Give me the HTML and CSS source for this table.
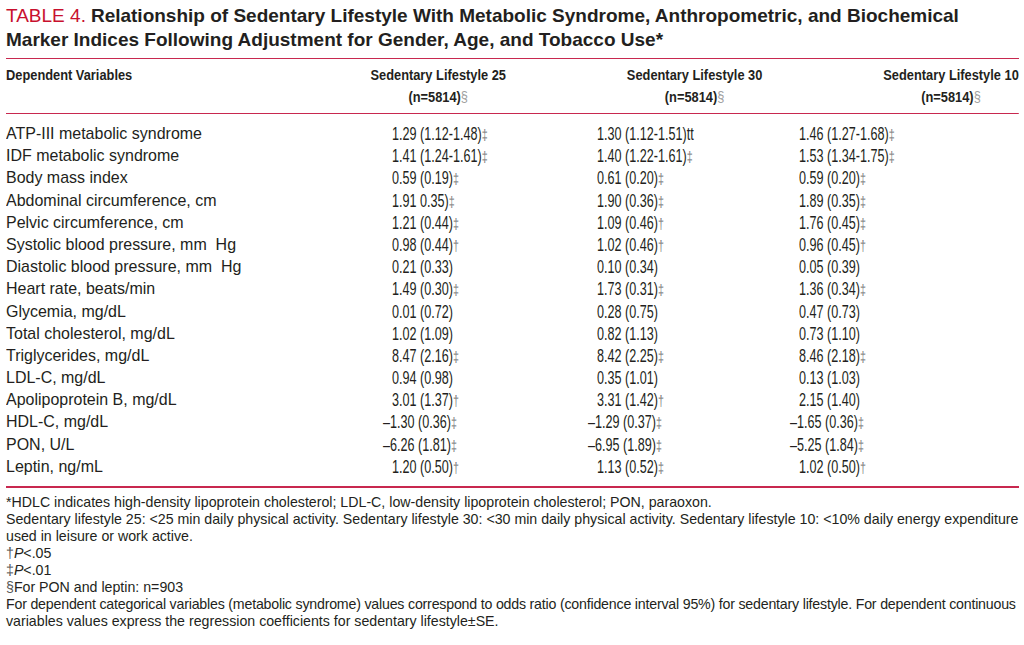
FILE: index.html
```html
<!DOCTYPE html>
<html lang="en">
<head>
<meta charset="utf-8">
<title>Table 4</title>
<link rel="stylesheet" href="styles.css">
</head>
<body>
<div class="page">
  <h1 class="title"><span class="line"><span class="tag">TABLE 4.</span>Relationship of Sedentary Lifestyle With Metabolic Syndrome, Anthropometric, and Biochemical</span><span class="line">Marker Indices Following Adjustment for Gender, Age, and Tobacco Use*</span></h1>
  <div class="table">
    <div class="thead">
      <div class="th-label">Dependent Variables</div>
      <div class="th">Sedentary Lifestyle 25<br>(n=5814)<span class="mk">§</span></div>
      <div class="th">Sedentary Lifestyle 30<br>(n=5814)<span class="mk">§</span></div>
      <div class="th">Sedentary Lifestyle 10<br>(n=5814)<span class="mk">§</span></div>
    </div>
    <div class="tbody">
      <div class="row"><span class="name">ATP-III metabolic syndrome</span><span class="val">1.29 (1.12-1.48)<span class="mk">‡</span></span><span class="val">1.30 (1.12-1.51)tt</span><span class="val">1.46 (1.27-1.68)<span class="mk">‡</span></span></div>
      <div class="row"><span class="name">IDF metabolic syndrome</span><span class="val">1.41 (1.24-1.61)<span class="mk">‡</span></span><span class="val">1.40 (1.22-1.61)<span class="mk">‡</span></span><span class="val">1.53 (1.34-1.75)<span class="mk">‡</span></span></div>
      <div class="row"><span class="name">Body mass index</span><span class="val">0.59 (0.19)<span class="mk">‡</span></span><span class="val">0.61 (0.20)<span class="mk">‡</span></span><span class="val">0.59 (0.20)<span class="mk">‡</span></span></div>
      <div class="row"><span class="name">Abdominal circumference, cm</span><span class="val">1.91 0.35)<span class="mk">‡</span></span><span class="val">1.90 (0.36)<span class="mk">‡</span></span><span class="val">1.89 (0.35)<span class="mk">‡</span></span></div>
      <div class="row"><span class="name">Pelvic circumference, cm</span><span class="val">1.21 (0.44)<span class="mk">‡</span></span><span class="val">1.09 (0.46)<span class="mk">†</span></span><span class="val">1.76 (0.45)<span class="mk">‡</span></span></div>
      <div class="row"><span class="name">Systolic blood pressure, mm&nbsp;&nbsp;Hg</span><span class="val">0.98 (0.44)<span class="mk">†</span></span><span class="val">1.02 (0.46)<span class="mk">†</span></span><span class="val">0.96 (0.45)<span class="mk">†</span></span></div>
      <div class="row"><span class="name">Diastolic blood pressure, mm&nbsp;&nbsp;Hg</span><span class="val">0.21 (0.33)</span><span class="val">0.10 (0.34)</span><span class="val">0.05 (0.39)</span></div>
      <div class="row"><span class="name">Heart rate, beats/min</span><span class="val">1.49 (0.30)<span class="mk">‡</span></span><span class="val">1.73 (0.31)<span class="mk">‡</span></span><span class="val">1.36 (0.34)<span class="mk">‡</span></span></div>
      <div class="row"><span class="name">Glycemia, mg/dL</span><span class="val">0.01 (0.72)</span><span class="val">0.28 (0.75)</span><span class="val">0.47 (0.73)</span></div>
      <div class="row"><span class="name">Total cholesterol, mg/dL</span><span class="val">1.02 (1.09)</span><span class="val">0.82 (1.13)</span><span class="val">0.73 (1.10)</span></div>
      <div class="row"><span class="name">Triglycerides, mg/dL</span><span class="val">8.47 (2.16)<span class="mk">‡</span></span><span class="val">8.42 (2.25)<span class="mk">‡</span></span><span class="val">8.46 (2.18)<span class="mk">‡</span></span></div>
      <div class="row"><span class="name">LDL-C, mg/dL</span><span class="val">0.94 (0.98)</span><span class="val">0.35 (1.01)</span><span class="val">0.13 (1.03)</span></div>
      <div class="row"><span class="name">Apolipoprotein B, mg/dL</span><span class="val">3.01 (1.37)<span class="mk">†</span></span><span class="val">3.31 (1.42)<span class="mk">†</span></span><span class="val">2.15 (1.40)</span></div>
      <div class="row"><span class="name">HDL-C, mg/dL</span><span class="val"><span class="neg">–</span>1.30 (0.36)<span class="mk">‡</span></span><span class="val"><span class="neg">–</span>1.29 (0.37)<span class="mk">‡</span></span><span class="val"><span class="neg">–</span>1.65 (0.36)<span class="mk">‡</span></span></div>
      <div class="row"><span class="name">PON, U/L</span><span class="val"><span class="neg">–</span>6.26 (1.81)<span class="mk">‡</span></span><span class="val"><span class="neg">–</span>6.95 (1.89)<span class="mk">‡</span></span><span class="val"><span class="neg">–</span>5.25 (1.84)<span class="mk">‡</span></span></div>
      <div class="row"><span class="name">Leptin, ng/mL</span><span class="val">1.20 (0.50)<span class="mk">†</span></span><span class="val">1.13 (0.52)<span class="mk">‡</span></span><span class="val">1.02 (0.50)<span class="mk">†</span></span></div>
    </div>
  </div>
  <div class="notes">
    <p>*HDLC indicates high-density lipoprotein cholesterol; LDL-C, low-density lipoprotein cholesterol; PON, paraoxon.</p>
    <p>Sedentary lifestyle 25: &lt;25 min daily physical activity. Sedentary lifestyle 30: &lt;30 min daily physical activity. Sedentary lifestyle 10: &lt;10% daily energy expenditure<br>used in leisure or work active.</p>
    <p><span class="mk">†</span><i>P</i>&lt;.05</p>
    <p><span class="mk">‡</span><i>P</i>&lt;.01</p>
    <p><span class="mk">§</span>For PON and leptin: n=903</p>
    <p><span class="tight">For dependent categorical variables (metabolic syndrome) values correspond to odds ratio (confidence interval 95%) for sedentary lifestyle. For dependent continuous</span><br>variables values express the regression coefficients for sedentary lifestyle±SE.</p>
  </div>
</div>
</body>
</html>
```

FILE: styles.css
```css
html, body {
  margin: 0;
  padding: 0;
  background: #ffffff;
  overflow: hidden;
}

body {
  color: #231f20;
  font-family: "Liberation Sans", Arial, sans-serif;
}

.page {
  width: 1013px;
  padding: 4px 5px 0 6px;
}

.title {
  margin: 0;
  font-size: 19px;
  line-height: 24px;
  font-weight: bold;
  color: #231f20;
}

.title .line {
  display: block;
  white-space: nowrap;
}

.title .tag {
  display: inline-block;
  margin-right: 5px;
  font-weight: normal;
  color: #c8102e;
}

.table {
  margin-top: 6px;
  border-top: 1px solid #c8284f;
  border-bottom: 2px solid #c8284f;
}

.thead {
  display: flex;
  align-items: flex-start;
  gap: 130px;
  width: 1089px;
  padding: 6px 0 4px;
  border-bottom: 1px solid #c8284f;
  font-size: 13.8px;
  line-height: 22px;
  font-weight: bold;
  transform: scaleX(0.93);
  transform-origin: 0 0;
}

.th-label {
  flex: 1;
}

.th {
  text-align: center;
}

.th .mk {
  font-weight: normal;
  font-size: 1em;
  color: #a0a0a0;
}

.tbody {
  padding: 9px 0 8px;
}

.row {
  display: grid;
  grid-template-columns: 386px 205px 202px 1fr;
  line-height: 22.2px;
  height: 22.2px;
}

.name {
  font-size: 17px;
  white-space: nowrap;
  transform: scaleX(0.94);
  transform-origin: 0 50%;
}

.val {
  font-size: 17.5px;
  white-space: nowrap;
  transform: scaleX(0.72);
  transform-origin: 0 50%;
}

.neg {
  margin-left: -12.5px;
}

.mk {
  font-size: 0.85em;
  color: #7a7a7a;
}

.notes {
  margin-top: 6px;
  font-size: 14.2px;
  line-height: 17px;
  white-space: nowrap;
}

.notes p {
  margin: 0;
}

.notes .tight {
  letter-spacing: -0.2px;
}

.notes .mk {
  font-size: 1em;
  color: #555555;
}
```
